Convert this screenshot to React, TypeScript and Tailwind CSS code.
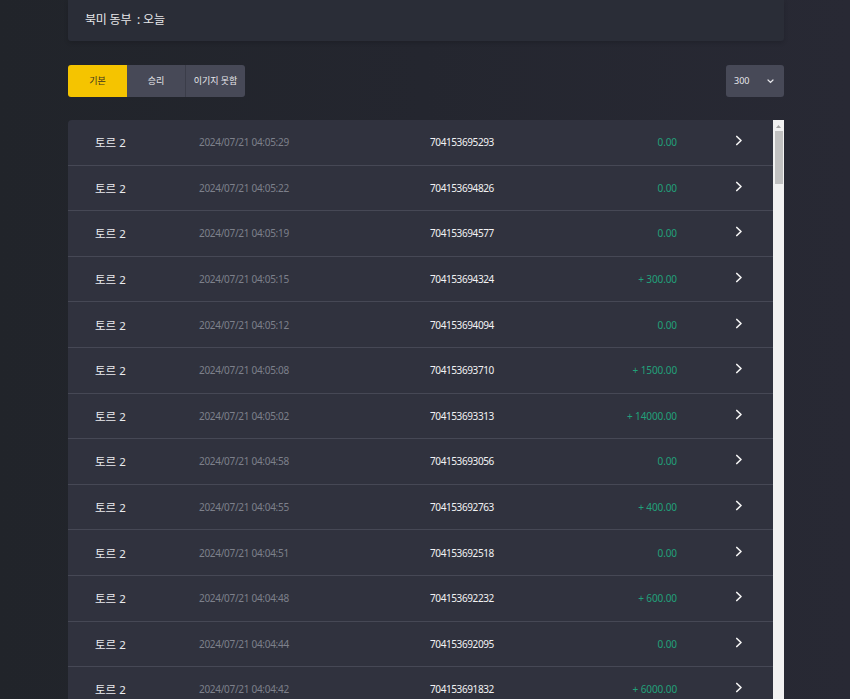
import React from "react";

const rows: [string, string, string][] = [
  ["04:05:29", "704153695293", "0.00"],
  ["04:05:22", "704153694826", "0.00"],
  ["04:05:19", "704153694577", "0.00"],
  ["04:05:15", "704153694324", "+ 300.00"],
  ["04:05:12", "704153694094", "0.00"],
  ["04:05:08", "704153693710", "+ 1500.00"],
  ["04:05:02", "704153693313", "+ 14000.00"],
  ["04:04:58", "704153693056", "0.00"],
  ["04:04:55", "704153692763", "+ 400.00"],
  ["04:04:51", "704153692518", "0.00"],
  ["04:04:48", "704153692232", "+ 600.00"],
  ["04:04:44", "704153692095", "0.00"],
  ["04:04:42", "704153691832", "+ 6000.00"],
];

function Chevron() {
  return (
    <svg width="8" height="11" viewBox="0 0 8 11" fill="none">
      <path d="M1.8 1.5 L6 5.5 L1.8 9.5" stroke="#f2f2f2" strokeWidth="1.7" strokeLinecap="round" strokeLinejoin="round" />
    </svg>
  );
}

export default function App() {
  return (
    <div
      className="w-[850px] h-[699px] overflow-hidden bg-gradient-to-r from-[#21242a] via-[#24262f] to-[#282934]"
      style={{ fontFamily: '"Noto Sans", "Noto Sans CJK KR", sans-serif' }}
    >
      <div className="ml-[68px] w-[716px]">
        <div className="h-[41px] bg-[#2a2d37] rounded-b-[3px] shadow-[0_2px_4px_rgba(0,0,0,0.15)] flex items-center pl-[17px] pb-[2px]">
          <span className="text-[12px] text-[#e8e8ea] tracking-[-0.2px]">북미 동부 &nbsp;: 오늘</span>
        </div>

        <div className="mt-[24px] flex justify-between items-center">
          <div className="flex h-[32px] rounded-[3px] overflow-hidden">
            <div className="w-[59px] bg-[#f5c400] flex items-center justify-center text-[9px] text-[#3a3320]">기본</div>
            <div className="w-[59px] bg-[#474957] flex items-center justify-center text-[9px] text-[#e6e6ea] border-r border-[#3b3d49]">승리</div>
            <div className="w-[59px] bg-[#474957] flex items-center justify-center text-[9px] text-[#e6e6ea]">이기지 못함</div>
          </div>
          <div className="w-[58px] h-[32px] bg-[#474957] rounded-[3px] flex items-center justify-between pl-[8px] pr-[10px]">
            <span className="text-[9px] text-[#e6e6ea]">300</span>
            <svg width="7" height="5" viewBox="0 0 7 5" fill="none">
              <path d="M1 1 L3.5 3.5 L6 1" stroke="#e6e6ea" strokeWidth="1.2" strokeLinecap="round" />
            </svg>
          </div>
        </div>

        <div className="mt-[23px] flex">
          <div className="w-[705px] bg-[#30323e] rounded-tl-[4px]">
            {rows.map(([t, id, amt], i) => (
              <div key={i} className="h-[45.6px] flex items-center border-b border-[#464855] pl-[27px] pt-[1px]">
                <span className="w-[104px] text-[11.5px] text-[#ececef]">토르 2</span>
                <span className="w-[231px] text-[10px] tracking-[-0.3px] text-[#7d808b]">2024/07/21 {t}</span>
                <span className="w-[140px] text-[10px] tracking-[-0.4px] text-[#f2f2f4]">{id}</span>
                <span className="w-[107px] text-right text-[10px] tracking-[-0.1px] text-[#22a07a]">{amt}</span>
                <span className="ml-[58px] flex items-center pb-[4px]">
                  <Chevron />
                </span>
              </div>
            ))}
          </div>
          <div className="w-[11px] h-[600px] bg-[#f1f1f1] flex flex-col items-center">
            <svg width="7" height="8" viewBox="0 0 7 8" className="mt-[2px]">
              <path d="M1 6 L3.5 3 L6 6 Z" fill="#a3a3a3" />
            </svg>
            <div className="mt-[1px] w-[8px] h-[53px] bg-[#c1c1c1]" />
          </div>
        </div>
      </div>
    </div>
  );
}
